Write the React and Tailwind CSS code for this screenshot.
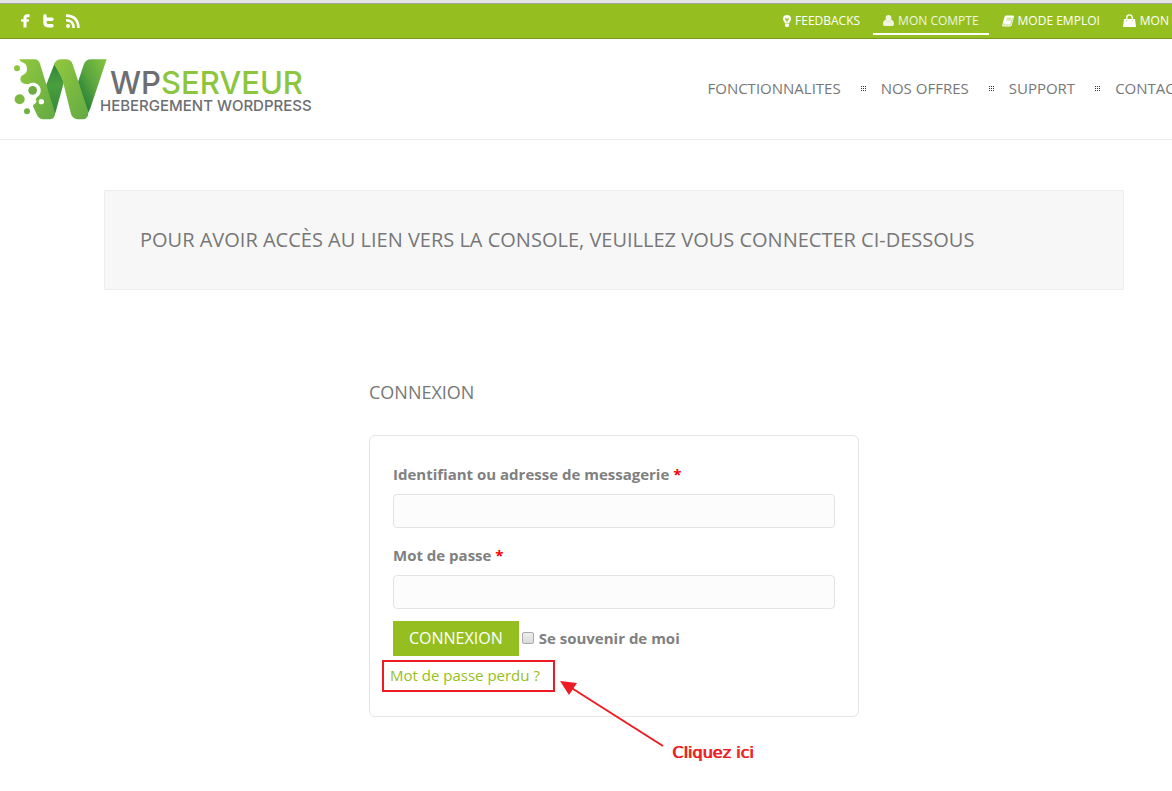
import React, { useState } from "react";

function FacebookIcon() {
  return (
    <svg viewBox="0 0 9 14" className="h-[14px] w-[9px]" fill="none" stroke="currentColor" strokeWidth="3">
      <path d="M8.500 1.800H6.300Q4 1.800 4 4v9.500" />
      <path strokeWidth="2.400" d="M0 6.500h7.800" />
    </svg>
  );
}

function TwitterIcon() {
  return (
    <svg viewBox="0 0 12 14" className="h-[14px] w-3" fill="none" stroke="currentColor" strokeWidth="3.400" strokeLinecap="round" strokeLinejoin="round">
      <path d="M3 1.800v6.700q0 3.200 3.200 3.200H10M3 5.200h7" />
    </svg>
  );
}

function RssIcon() {
  return (
    <svg viewBox="0 0 14 14" className="h-[14px] w-[14px]" fill="none" stroke="currentColor" strokeWidth="2.600">
      <circle cx="2" cy="12" r="2" fill="currentColor" stroke="none" />
      <path d="M0 6.300q7.500 0 7.700 7.700M0 1.600q12.200.2 12.400 12.400" />
    </svg>
  );
}

function BulbIcon() {
  return (
    <svg viewBox="0 0 8 12" className="h-3 w-2" fill="currentColor">
      <path
        fillRule="evenodd"
        d="M4 0a4 4 0 0 1 4 4c0 2-1.700 2.600-1.900 4.500H1.900C1.700 6.600 0 6 0 4a4 4 0 0 1 4-4zM2.300 2.600v1.800L3.500 5.800v1.400h1V5.800l1.200-1.400V2.600L4 4z"
      />
      <path d="M2 9h4v2L5 12H3l-1-1z" />
    </svg>
  );
}

function UserIcon() {
  return (
    <svg viewBox="0 0 11 11" className="h-[11px] w-[11px]" fill="currentColor">
      <ellipse cx="5.500" cy="3.300" rx="2.900" ry="3.300" />
      <path d="M2.600 4.800q2.900 3.500 5.800 0Q11 5.500 11 9.200 11 11 9.500 11h-8Q0 11 0 9.200 0 5.500 2.600 4.800z" />
    </svg>
  );
}

function BookIcon() {
  return (
    <svg viewBox="0 0 12 12" className="h-3 w-3">
      <path fill="currentColor" d="M4.200.5h6.800q1.200.2.900 1.400L9.800 10q-.4 1.400-1.800 1.400H1.700Q-.2 11.400.3 9.400L2.500 2Q3 .5 4.200.5z" />
      <path stroke="#95bf21" strokeWidth=".6" fill="none" d="M4.800 3.200h4.700M4.300 5H9M1.600 8.300q-.7 1.700.5 1.700h5.700q.8 0 1-.8l1.700-6" />
    </svg>
  );
}

function BagIcon() {
  return (
    <svg viewBox="0 0 13 13" className="h-[13px] w-[13px]">
      <path fill="currentColor" d="M1 5h11l1 8H0z" />
      <path stroke="currentColor" strokeWidth="1.300" fill="none" d="M3.800 7V3.500a2.700 2.700 0 0 1 5.400 0V7" />
      <path stroke="#95bf21" strokeWidth=".5" d="M3.800 5.500v2M9.200 5.500v2" />
    </svg>
  );
}

function DotsIcon() {
  return (
    <svg viewBox="0 0 5 5" className="h-[5px] w-[5px]" fill="#333" shapeRendering="crispEdges">
      <path d="M0 0h1v1H0zM2 0h1v1H2zM4 0h1v1H4zM0 2h1v1H0zM2 2h1v1H2zM4 2h1v1H4zM0 4h1v1H0zM2 4h1v1H2zM4 4h1v1H4z" />
    </svg>
  );
}

function LogoMark() {
  return (
    <svg viewBox="42 41 279 183" className="h-[61px] w-[93px] shrink-0">
      <defs>
        <linearGradient id="ribbon" x1="0" y1="0" x2="1" y2="1">
          <stop offset="0" stopColor="#93c83e" />
          <stop offset="1" stopColor="#62aa43" />
        </linearGradient>
        <linearGradient id="fold" x1="0" y1="0" x2="0" y2="1">
          <stop offset="0" stopColor="#2f853a" />
          <stop offset=".4" stopColor="#4a9f3d" />
          <stop offset="1" stopColor="#2f853a" />
        </linearGradient>
        <linearGradient id="last" x1="1" y1="0" x2="0" y2="1">
          <stop offset="0" stopColor="#86c440" />
          <stop offset=".45" stopColor="#5aa63e" />
          <stop offset=".8" stopColor="#257c38" />
        </linearGradient>
      </defs>
      <path fill="url(#fold)" d="M164 54L138 120l8 88q4 14 12 8 6-4 9-16l25-90z" />
      <path fill="url(#last)" d="M320 42h-46q-17 0-23 16l-22 68v80q30 14 38-8 3-5 5-12z" />
      <path
        fill="url(#ribbon)"
        d="M58 42h46q12 0 17 16l43 142q3 22-14 22h-21q-14-1-19-15l-10-22q-2-5 0-7 8-2 10-10-6-8 2-13A23 23 0 0 0 86 116Q62 118 61 102q0-10 9-14 12-6 11-18-1-16-15-19-6-3-8-9z"
      />
      <path fill="url(#ribbon)" d="M162 57q6-15 21-15h14q16 0 21 15l46 139q4 26-18 26h-13q-15-1-20-16L186 97z" />
      <circle cx="51" cy="69" r="9" fill="#8cc63f" />
      <circle cx="98" cy="135" r="13" fill="#6dac43" />
      <circle cx="59" cy="162" r="15" fill="#7cba3f" />
      <circle cx="81" cy="198" r="9" fill="#72b340" />
      <circle cx="124" cy="169" r="8" fill="#fff" />
    </svg>
  );
}

const topLinks = [
  { label: "FEEDBACKS", icon: <BulbIcon /> },
  { label: "MON COMPTE", icon: <UserIcon />, active: true },
  { label: "MODE EMPLOI", icon: <BookIcon /> },
  { label: "MON", icon: <BagIcon /> },
];

const menu = ["FONCTIONNALITES", "NOS OFFRES", "SUPPORT", "CONTACT"];

export default function App() {
  const [login, setLogin] = useState("");
  const [password, setPassword] = useState("");
  const [remember, setRemember] = useState(false);

  const inputClass = "block h-[34px] w-full rounded border border-[#e3e3e3] bg-[#fcfcfc] px-3 outline-none";

  return (
    <div className="min-h-screen overflow-x-hidden bg-white font-['Open_Sans',sans-serif] text-[15px] leading-6 text-[#777]">
      {/* top bar */}
      <div className="flex h-[39px] flex-col border-b border-[#779a1a] bg-[#95bf21] text-white">
        <div className="h-1 border-b border-[#a6a6a6] bg-[#e4e4e4]" />
        <div className="flex flex-1 items-center justify-between">
          <div className="flex items-center gap-3 pl-[21px]">
            <a href="#facebook" aria-label="Facebook"><FacebookIcon /></a>
            <a href="#twitter" aria-label="Twitter"><TwitterIcon /></a>
            <a href="#rss" aria-label="RSS"><RssIcon /></a>
          </div>
          <nav className="-mr-[7px] flex h-full gap-[3px] pb-[3px] text-xs whitespace-nowrap">
            {topLinks.map((link) => (
              <a
                key={link.label}
                href="#top"
                className={
                  link.active
                    ? "flex items-center gap-1 border-b-2 border-white px-[10px] pt-1 text-[#f0f5e0]"
                    : "flex items-center gap-1 border-b-2 border-transparent px-[10px] pt-1"
                }
              >
                {link.icon}
                {link.label}
              </a>
            ))}
          </nav>
        </div>
      </div>

      {/* header */}
      <header className="flex h-[101px] items-center justify-between border-b border-[#ebebeb] pl-[14px]">
        <a href="#home" className="flex font-['Inter',sans-serif] font-medium whitespace-nowrap text-[#6d6e71]">
          <LogoMark />
          <span className="-ml-[7px] flex flex-col pt-1">
            <span className="pl-[10px] text-[31px] leading-10">
              WP<span className="text-[#8cc63f]">SERVEUR</span>
            </span>
            <span className="-mt-1 text-[15px] leading-[14px]">HEBERGEMENT WORDPRESS</span>
          </span>
        </a>
        <nav className="-mr-[11px] flex items-center pb-[2px] whitespace-nowrap">
          {menu.map((item, i) => (
            <React.Fragment key={item}>
              {i > 0 && <span className="pr-[15px] pl-5"><DotsIcon /></span>}
              <a href="#menu">{item}</a>
            </React.Fragment>
          ))}
        </nav>
      </header>

      <main className="pl-14">
        <div className="mx-auto mt-[50px] flex min-h-[100px] max-w-[1020px] items-center border border-[#ededed] bg-[#f7f7f7] px-[35px]">
          <h1 className="text-xl">POUR AVOIR ACCÈS AU LIEN VERS LA CONSOLE, VEUILLEZ VOUS CONNECTER CI-DESSOUS</h1>
        </div>

        <section className="relative mx-auto mt-[90px] max-w-[490px]">
          <h2 className="text-lg leading-6">CONNEXION</h2>
          <form
            className="mt-[31px] rounded-md border border-[#e5e5e5] px-[23px] pt-[26px] pb-6"
            onSubmit={(e) => e.preventDefault()}
          >
            <label htmlFor="login" className="mb-2 block font-bold text-[#808080]">
              Identifiant ou adresse de messagerie <span className="text-[#f00]">*</span>
            </label>
            <input id="login" type="text" className={inputClass} value={login} onChange={(e) => setLogin(e.target.value)} />

            <label htmlFor="password" className="mt-[15px] mb-2 block font-bold text-[#808080]">
              Mot de passe <span className="text-[#f00]">*</span>
            </label>
            <input id="password" type="password" className={inputClass} value={password} onChange={(e) => setPassword(e.target.value)} />

            <div className="mt-3 flex items-center">
              <button type="submit" className="h-[35px] bg-[#95bf21] px-4 pb-[2px] text-base text-white">CONNEXION</button>
              <label className="flex items-center gap-[5px] pb-[2px] pl-[3px] font-bold text-[#808080]">
                <input
                  type="checkbox"
                  checked={remember}
                  onChange={(e) => setRemember(e.target.checked)}
                  className="h-3 w-3 appearance-none rounded-xs border border-[#a9a9a9] bg-linear-to-b from-[#eee] to-[#dadada] checked:bg-[#95bf21]"
                />
                Se souvenir de moi
              </label>
            </div>
            <a href="#lost" className="mt-1 -ml-[11px] inline-flex h-8 items-center border-2 border-[#ed1c24] pr-[13px] pb-[2px] pl-[6px] text-[#95bf21]">
              Mot de passe perdu ?
            </a>
          </form>

          {/* hint arrow */}
          <div className="pointer-events-none absolute top-[300px] left-[191px] flex items-end whitespace-nowrap text-[#ed1c24]">
            <svg viewBox="0 0 104 67" className="h-[67px] w-[104px]">
              <path d="M10 7l93 59" stroke="#ed1c24" strokeWidth="2" />
              <path d="M0 1l17 2-8 12z" fill="#ed1c24" />
            </svg>
            <span className="-mb-[18px] pl-2 font-['DejaVu_Sans',sans-serif] text-base [text-shadow:1px_0_0_#ed1c24]">Cliquez ici</span>
          </div>
        </section>
      </main>
    </div>
  );
}
